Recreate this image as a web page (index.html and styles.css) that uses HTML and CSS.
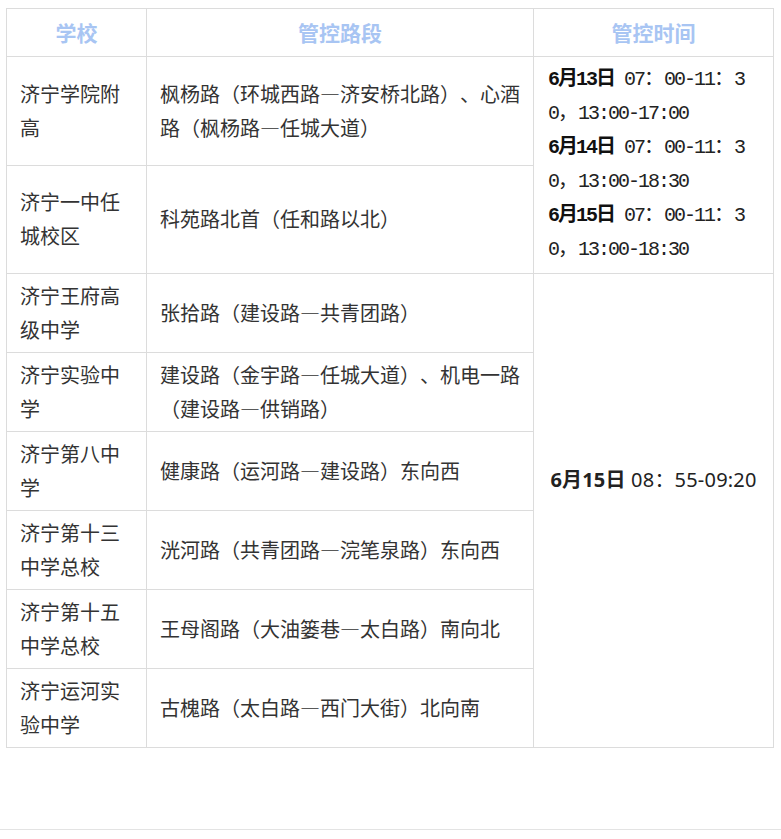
FILE: index.html
```html
<!DOCTYPE html>
<html lang="zh-CN">
<head>
<meta charset="utf-8">
<link rel="stylesheet" href="styles.css">
</head>
<body>
<div class="page">
  <table class="schedule">
    <colgroup>
      <col class="c-school">
      <col class="c-road">
      <col class="c-time">
    </colgroup>
    <thead>
      <tr>
        <th>学校</th>
        <th>管控路段</th>
        <th>管控时间</th>
      </tr>
    </thead>
    <tbody>
      <tr>
        <td>济宁学院附高</td>
        <td>枫杨路（环城西路—济安桥北路）、心酒路（枫杨路—任城大道）</td>
        <td rowspan="2" class="mono"><b>6月13日</b> 07<span class="fw">：</span>00-11<span class="fw">：</span>3<br>0<span class="fw">，</span>13:00-17:00<br><b>6月14日</b> 07<span class="fw">：</span>00-11<span class="fw">：</span>3<br>0<span class="fw">，</span>13:00-18:30<br><b>6月15日</b> 07<span class="fw">：</span>00-11<span class="fw">：</span>3<br>0<span class="fw">，</span>13:00-18:30</td>
      </tr>
      <tr>
        <td>济宁一中任城校区</td>
        <td>科苑路北首（任和路以北）</td>
      </tr>
      <tr>
        <td>济宁王府高级中学</td>
        <td>张拾路（建设路—共青团路）</td>
        <td rowspan="6" class="center"><b>6月15日</b> 08：55-09:20</td>
      </tr>
      <tr>
        <td>济宁实验中学</td>
        <td>建设路（金宇路—任城大道）、机电一路（建设路—供销路）</td>
      </tr>
      <tr>
        <td>济宁第八中学</td>
        <td>健康路（运河路—建设路）东向西</td>
      </tr>
      <tr>
        <td>济宁第十三中学总校</td>
        <td>洸河路（共青团路—浣笔泉路）东向西</td>
      </tr>
      <tr>
        <td>济宁第十五中学总校</td>
        <td>王母阁路（大油篓巷—太白路）南向北</td>
      </tr>
      <tr>
        <td>济宁运河实验中学</td>
        <td>古槐路（太白路—西门大街）北向南</td>
      </tr>
    </tbody>
  </table>
  <div class="rule"></div>
</div>
</body>
</html>
```

FILE: styles.css
```css
html, body {
  margin: 0;
  padding: 0;
  background: #fff;
}

.page {
  padding: 8px 8px 0 6px;
  font-family: "Noto Sans CJK SC", "Noto Sans", sans-serif;
  color: #333;
  text-spacing-trim: space-all;
}

.schedule {
  width: 767px;
  border-collapse: collapse;
  table-layout: fixed;
}

.c-school { width: 140px; }
.c-road { width: 387px; }
.c-time { width: 240px; }

.schedule th,
.schedule td {
  border: 1px solid #dcdcdc;
  font-size: 20px;
  line-height: 34px;
  vertical-align: middle;
  text-align: left;
  padding: 5px 13px;
  word-break: break-all;
  text-spacing-trim: space-all;
}

.schedule th {
  height: 36px;
  padding: 5px 13px 6px;
  text-align: center;
  font-size: 21px;
  font-weight: 700;
  color: #a8c5f3;
}

.schedule .mono {
  font-family: "Liberation Mono", "Noto Sans CJK SC", monospace;
  font-size: 20px;
  letter-spacing: -2px;
  color: #222;
  padding: 6px 14px;
  white-space: nowrap;
}

.schedule .mono .fw {
  font-family: "Noto Sans CJK SC", sans-serif;
  letter-spacing: 0;
  line-height: 0;
}

.schedule .mono b {
  font-weight: 700;
  color: #111;
}

.schedule .center {
  text-align: center;
  padding: 5px 8px 66px;
  color: #222;
  font-family: "Noto Sans", "Noto Sans CJK SC", sans-serif;
  font-size: 20px;
  letter-spacing: 0.2px;
}

.schedule .center b {
  font-weight: 700;
}

.rule {
  margin: 81px -8px 0 -6px;
  border-top: 1px solid #e3e3e3;
}
```
